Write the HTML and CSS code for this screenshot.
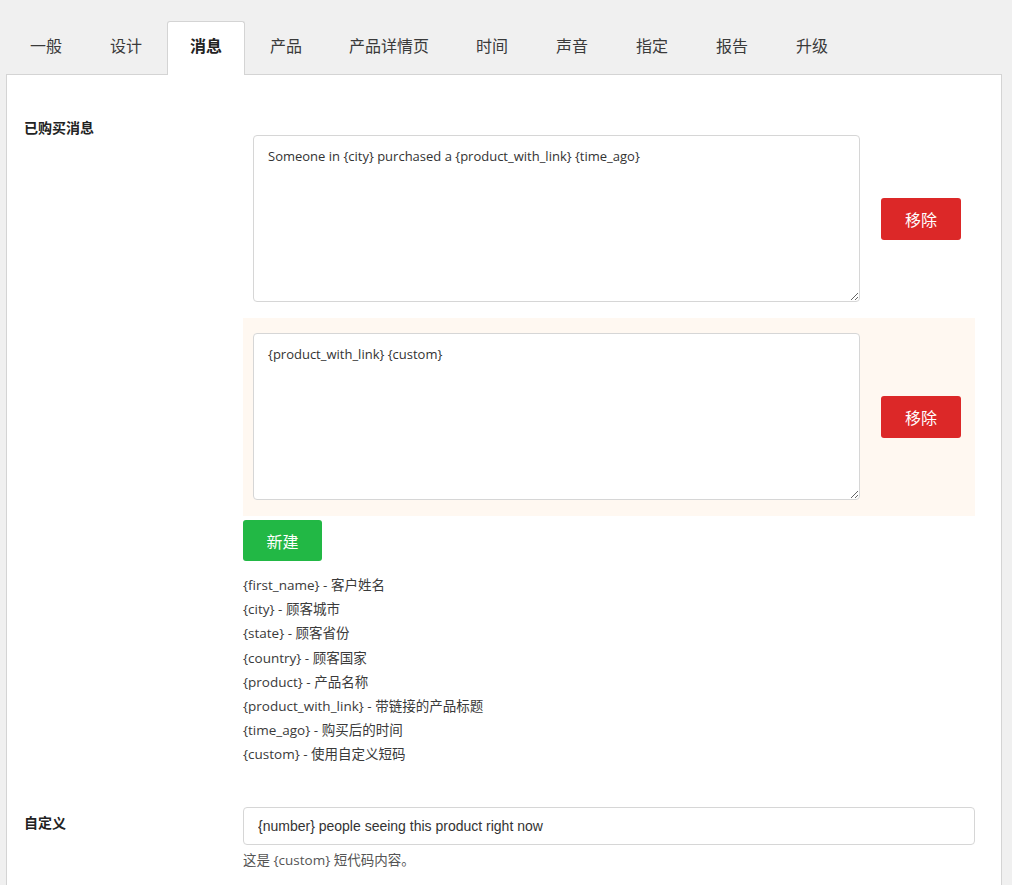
FILE: index.html
```html
<!DOCTYPE html>
<html lang="zh">
<head>
<meta charset="utf-8">
<link rel="stylesheet" href="styles.css">
</head>
<body>
<nav class="tabs">
  <a class="tab">一般</a>
  <a class="tab">设计</a>
  <a class="tab active">消息</a>
  <a class="tab">产品</a>
  <a class="tab">产品详情页</a>
  <a class="tab">时间</a>
  <a class="tab">声音</a>
  <a class="tab">指定</a>
  <a class="tab">报告</a>
  <a class="tab">升级</a>
</nav>
<main class="panel">
  <section class="field">
    <div class="label">已购买消息</div>
    <div class="content">
      <div class="msg-row">
        <textarea class="msg-text">Someone in {city} purchased a {product_with_link} {time_ago}</textarea>
        <button class="btn btn-red">移除</button>
      </div>
      <div class="msg-row hl">
        <textarea class="msg-text">{product_with_link} {custom}</textarea>
        <button class="btn btn-red">移除</button>
      </div>
      <button class="btn btn-green">新建</button>
      <ul class="vars">
        <li>{first_name} - 客户姓名</li>
        <li>{city} - 顾客城市</li>
        <li>{state} - 顾客省份</li>
        <li>{country} - 顾客国家</li>
        <li>{product} - 产品名称</li>
        <li>{product_with_link} - 带链接的产品标题</li>
        <li>{time_ago} - 购买后的时间</li>
        <li>{custom} - 使用自定义短码</li>
      </ul>
    </div>
  </section>
  <section class="field field-custom">
    <div class="label label-input">自定义</div>
    <div class="content">
      <input class="text-input" type="text" value="{number} people seeing this product right now">
      <p class="help">这是 {custom} 短代码内容。</p>
    </div>
  </section>
</main>
</body>
</html>
```
FILE: styles.css
```css
html, body {
  margin: 0;
  padding: 0;
}
body {
  background: #f0f0f0;
  font-family: "Open Sans", "Noto Sans CJK SC", sans-serif;
  color: #333;
  padding: 21px 10px 0 6px;
  height: 885px;
  box-sizing: border-box;
  overflow: hidden;
}
.tabs {
  display: flex;
  height: 53px;
  position: relative;
  z-index: 1;
}
.tab {
  display: flex;
  align-items: center;
  justify-content: center;
  width: 80px;
  font-size: 16px;
  line-height: 20px;
  color: #3a3a3a;
  border: 1px solid transparent;
  border-bottom: none;
  border-radius: 3px 3px 0 0;
  height: 54px;
  box-sizing: border-box;
  padding-bottom: 5px;
  white-space: nowrap;
}
.tab:nth-child(5) {
  width: 126px;
}
.tab.active {
  background: #fff;
  border-color: #d4d4d4;
  font-weight: bold;
  color: #222;
  margin: 0 1px;
  width: 78px;
}
.panel {
  background: #fff;
  border: 1px solid #d4d4d4;
  min-height: 900px;
  padding: 45px 26px 0 17px;
}
.field {
  display: grid;
  grid-template-columns: 219px 1fr;
}
.label {
  font-size: 14px;
  font-weight: bold;
  color: #222;
  line-height: 16px;
}
.content {
  display: flex;
  flex-direction: column;
  align-items: flex-start;
}
.msg-row {
  display: flex;
  align-items: center;
  gap: 21px;
  padding: 15px 14px 16px 10px;
  align-self: stretch;
}
.msg-row.hl {
  background: #fff8f1;
}
.msg-text {
  width: 607px;
  height: 167px;
  box-sizing: border-box;
  border: 1px solid #d6d6d6;
  border-radius: 4px;
  padding: 10px 14px;
  font-family: "Open Sans", "Noto Sans CJK SC", sans-serif;
  font-size: 13px;
  line-height: 20px;
  color: #333;
  resize: vertical;
  margin: 0;
}
.btn {
  border: none;
  border-radius: 3px;
  color: #fff;
  font-family: "Open Sans", "Noto Sans CJK SC", sans-serif;
  font-size: 16px;
  width: 80px;
  height: 42px;
  padding: 0;
}
.btn-red {
  background: #dc2828;
}
.btn-green {
  background: #22b845;
  width: 79px;
  height: 41px;
  margin-top: 4px;
}
.vars {
  list-style: none;
  margin: 12px 0 0;
  padding: 0;
  font-size: 13.5px;
  line-height: 24.2px;
  color: #3a3a3a;
}
.field-custom {
  margin-top: 40px;
}
.label-input {
  padding-top: 8px;
}
.text-input {
  width: 732px;
  height: 38px;
  box-sizing: border-box;
  border: 1px solid #d6d6d6;
  border-radius: 4px;
  padding: 0 14px;
  font-family: "Liberation Sans", "Noto Sans CJK SC", sans-serif;
  font-size: 14px;
  color: #333;
  margin: 0;
}
.help {
  margin: 5px 0 0;
  font-size: 13.5px;
  line-height: 20px;
  color: #555;
}
```
